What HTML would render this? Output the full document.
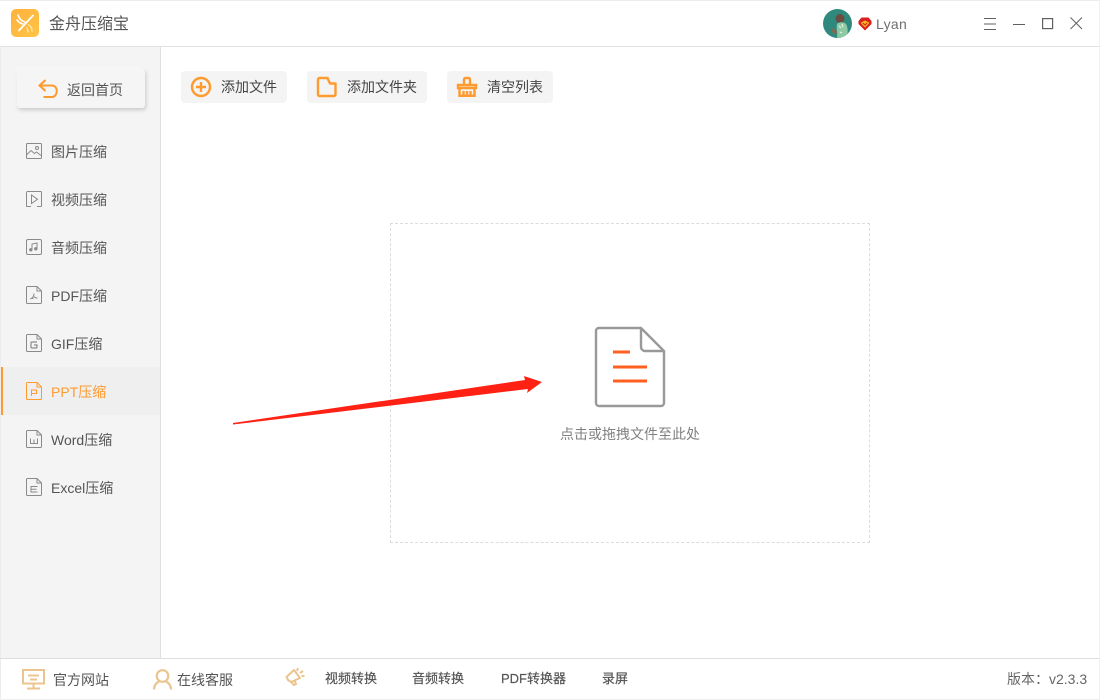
<!DOCTYPE html>
<html lang="zh">
<head>
<meta charset="utf-8">
<title>金舟压缩宝</title>
<style>
html,body{margin:0;padding:0;width:1100px;height:700px;overflow:hidden;background:#fff}
body{position:relative;font-family:"Liberation Sans","Noto Sans CJK SC",sans-serif;color:#555}
.a{position:absolute}
.t{position:absolute;white-space:nowrap;line-height:20px;height:20px}
svg{position:absolute;overflow:visible}
.side{left:51px;font-size:14px;color:#555}
.btn{position:absolute;top:71px;height:32px;background:#f4f4f4;border-radius:4px}
.bt{top:77px;font-size:14px;color:#444}
.ic{fill:none;stroke:#8a8a8a;stroke-width:1}
.or{fill:none;stroke:#ff9a2e;stroke-width:2.400}
.bm{font-size:13px;color:#555;top:669px;-webkit-text-stroke:.2px #555}
</style>
</head>
<body>
<!-- frame -->
<div class="a" style="left:0;top:0;width:1100px;height:1px;background:#ececec"></div>
<div class="a" style="left:0;top:46px;width:1100px;height:1px;background:#e2e2e2"></div>
<div class="a" style="left:0;top:47px;width:160px;height:611px;background:#f4f4f4"></div>
<div class="a" style="left:160px;top:47px;width:1px;height:611px;background:#e0e0e0"></div>
<div class="a" style="left:0;top:47px;width:1px;height:653px;background:#ececec"></div>
<div class="a" style="left:0;top:658px;width:1100px;height:1px;background:#dedede"></div>
<div class="a" style="left:0;top:699px;width:1100px;height:1px;background:#efefef"></div>
<div class="a" style="left:1099px;top:0;width:1px;height:700px;background:#f0f0f0"></div>

<!-- logo -->
<div class="a" style="left:11px;top:9px;width:28px;height:28px;border-radius:5px;background:linear-gradient(135deg,#ffb13c,#ffc445)"></div>
<svg style="left:11px;top:9px" width="28" height="28" viewBox="0 0 28 28" fill="none" stroke="#fff" stroke-linecap="round">
<path d="M22 6.500 8 21.500" stroke-width="1.800"/>
<path d="M7 6c1 3.500 3.500 6 7 7M6 11c1.500 2 3.500 3.500 6 4" stroke-width="1.600"/>
<path d="M17.500 16c2 .5 3.500 3 3.500 6M16 19c.5 1.500 1 3 1 4" stroke-width="1.400" stroke="#ffe6b8"/>
</svg>
<div class="t" style="left:49px;top:15px;font-size:16px;color:#555">金舟压缩宝</div>

<!-- user -->
<svg style="left:823px;top:9px" width="29" height="29" viewBox="0 0 29 29">
<defs><clipPath id="av"><circle cx="14.500" cy="14.500" r="14.500"/></clipPath></defs>
<circle cx="14.500" cy="14.500" r="14.500" fill="#2f8a7d"/>
<g clip-path="url(#av)">
<ellipse cx="17" cy="9.500" rx="4.500" ry="4.500" fill="#6a4c40"/>
<path d="M14 15c3-2.500 7-2 9 0 2 3 2 9 1 14H14c1-5-1-9 0-14z" fill="#8ec9a5"/>
<path d="M16 17l2 2M19 15l1 3M17 23l2 1" stroke="#e8f2e8" stroke-width="1.200"/>
<path d="M9 19l5 3-1 4-4-3z" fill="#7d6a55"/>
</g>
</svg>
<svg style="left:858px;top:17px" width="14" height="14" viewBox="0 0 14 14">
<path d="M3.500 .5h7L13.500 4v3L7 13.500.5 7V4z" fill="#d91f1f"/>
<path d="M3 5.500 7 3.500l4 2v1L7 10.500 3 6.500z" fill="#f2b91f"/>
<path d="M4.800 6 7 8l2.200-2" fill="none" stroke="#d91f1f" stroke-width="1.100"/>
</svg>
<div class="t" style="left:876px;top:14px;font-size:14px;letter-spacing:.3px;color:#6e6e6e">Lyan</div>
<svg style="left:983px;top:17px" width="14" height="14" viewBox="0 0 14 14" stroke="#606060" stroke-width="1" fill="none">
<path d="M1 1.500h12M1 7h12M1 12.500h12"/>
</svg>
<svg style="left:1012px;top:17px" width="14" height="14" viewBox="0 0 14 14" stroke="#606060" stroke-width="1" fill="none">
<path d="M1 7.500h12"/>
</svg>
<svg style="left:1041px;top:17px" width="14" height="14" viewBox="0 0 14 14" stroke="#606060" stroke-width="1.200" fill="none">
<rect x="1.600" y="1.600" width="10" height="10"/>
</svg>
<svg style="left:1069px;top:16px" width="14" height="14" viewBox="0 0 14 14" stroke="#606060" stroke-width="1" fill="none">
<path d="M1.500 1.500 13 13M13 1.500 1.500 13"/>
</svg>

<!-- back -->
<div class="a" style="left:17px;top:69px;width:128px;height:39px;background:#f5f5f5;border-radius:3px;box-shadow:1px 2px 4px rgba(0,0,0,.18),-1px -1px 2px rgba(255,255,255,.9)"></div>
<svg style="left:38px;top:79px" width="20" height="20" viewBox="0 0 20 20" fill="none" stroke="#ff9a2e" stroke-width="2">
<path d="M7.500 1 1.500 6.500l6 5.500M1.500 6.500h12.500c3 0 4.800 2.500 4.800 5.500s-1.800 6-4.800 6H5.500"/>
</svg>
<div class="t" style="left:67px;top:80px;font-size:14px;color:#555">返回首页</div>

<!-- sidebar icons -->
<svg style="left:26px;top:143px" width="16" height="16" viewBox="0 0 16 16" class="ic">
<rect x=".5" y=".5" width="15" height="15" rx="1"/><circle cx="11" cy="5" r="1.500"/><path d="M.5 12l4.500-4.500 3.500 3 2-1.500 4.500 3.500"/>
</svg>
<svg style="left:26px;top:191px" width="16" height="16" viewBox="0 0 16 16" class="ic">
<path d="M.5 15.500V1.500a1 1 0 0 1 1-1h13a1 1 0 0 1 1 1v14"/><path d="M5.500 4v8.500l6-4.200z"/><path d="M.5 15.500h4.500M11 15.500h4.500"/>
</svg>
<svg style="left:26px;top:239px" width="16" height="16" viewBox="0 0 16 16" class="ic">
<rect x=".5" y=".5" width="15" height="15" rx="1.500"/><path d="M6 10.500V5l5-1v5.500"/><circle cx="4.800" cy="10.800" r="1.200" fill="#8a8a8a"/><circle cx="9.800" cy="9.800" r="1.200" fill="#8a8a8a"/>
</svg>
<svg style="left:26px;top:286px" width="16" height="18" viewBox="0 0 16 18" class="ic">
<path d="M1.500.5H11l4.500 4.500v11.500a1 1 0 0 1-1 1h-13a1 1 0 0 1-1-1v-15a1 1 0 0 1 1-1zM11 .5V5h4.500"/><path d="M8 7.500c0 2.500-1.500 4.500-3.500 5.500M8 10.500c.5 1 2 1.500 3.500 1.500M4.500 12.500h3"/>
</svg>
<svg style="left:26px;top:334px" width="16" height="18" viewBox="0 0 16 18" class="ic">
<path d="M1.500.5H11l4.500 4.500v11.500a1 1 0 0 1-1 1h-13a1 1 0 0 1-1-1v-15a1 1 0 0 1 1-1zM11 .5V5h4.500"/><path d="M11 8h-5a1 1 0 0 0-1 1v4a1 1 0 0 0 1 1h4a1 1 0 0 0 1-1v-2H8" stroke-width="1.200"/>
</svg>

<!-- active -->
<div class="a" style="left:1px;top:367px;width:159px;height:48px;background:#efefef"></div>
<div class="a" style="left:1px;top:367px;width:2px;height:48px;background:#ff9a2e"></div>
<svg style="left:26px;top:382px" width="16" height="18" viewBox="0 0 16 18" fill="none" stroke="#ff9a2e" stroke-width="1">
<path d="M1.500.5H11l4.500 4.500v11.500a1 1 0 0 1-1 1h-13a1 1 0 0 1-1-1v-15a1 1 0 0 1 1-1zM11 .5V5h4.500"/><path d="M5.500 14V8h5v3.500h-5"/>
</svg>
<svg style="left:26px;top:430px" width="16" height="18" viewBox="0 0 16 18" class="ic">
<path d="M1.500.5H11l4.500 4.500v11.500a1 1 0 0 1-1 1h-13a1 1 0 0 1-1-1v-15a1 1 0 0 1 1-1zM11 .5V5h4.500"/><path d="M4.500 8.500v5h7v-5M8 9.500v4"/>
</svg>
<svg style="left:26px;top:478px" width="16" height="18" viewBox="0 0 16 18" class="ic">
<path d="M1.500.5H11l4.500 4.500v11.500a1 1 0 0 1-1 1h-13a1 1 0 0 1-1-1v-15a1 1 0 0 1 1-1zM11 .5V5h4.500"/><path d="M11.500 8.500h-6.500v5.500h6.500M5 11.200h5.500"/>
</svg>

<div class="t side" style="top:142px">图片压缩</div>
<div class="t side" style="top:190px">视频压缩</div>
<div class="t side" style="top:238px">音频压缩</div>
<div class="t side" style="top:286px">PDF压缩</div>
<div class="t side" style="top:334px">GIF压缩</div>
<div class="t side" style="top:382px;color:#ff9a2e">PPT压缩</div>
<div class="t side" style="top:430px">Word压缩</div>
<div class="t side" style="top:478px">Excel压缩</div>

<!-- toolbar -->
<div class="btn" style="left:181px;width:106px"></div>
<div class="btn" style="left:307px;width:120px"></div>
<div class="btn" style="left:447px;width:106px"></div>
<svg style="left:191px;top:77px" width="20" height="20" viewBox="0 0 20 20" class="or">
<circle cx="10" cy="10" r="9"/><path d="M10 5v10M5 10h10"/>
</svg>
<svg style="left:317px;top:77px" width="20" height="20" viewBox="0 0 20 20" class="or">
<path d="M2.500 1h8l2.500 5.500h5.500v11a1.500 1.500 0 0 1-1.500 1.500h-14A1.500 1.500 0 0 1 1 17.500v-15A1.500 1.500 0 0 1 2.500 1z" stroke-linejoin="round"/>
</svg>
<svg style="left:457px;top:77px" width="20" height="20" viewBox="0 0 20 20" class="or">
<path d="M7 7V2.500A1.500 1.500 0 0 1 8.500 1h3A1.500 1.500 0 0 1 13 2.500V7"/><path d="M1 8h18v3H1z"/><path d="M2.500 11v7.800h15V11M6.500 14v4.800M10 14v4.800M13.500 14v4.800"/>
</svg>
<div class="t bt" style="left:221px">添加文件</div>
<div class="t bt" style="left:347px">添加文件夹</div>
<div class="t bt" style="left:487px">清空列表</div>

<!-- drop zone -->
<div class="a" style="left:390px;top:223px;width:478px;height:318px;border:1px dashed #dcdcdc"></div>
<svg style="left:595px;top:327px" width="70" height="80" viewBox="0 0 70 80" fill="none">
<path d="M46 1H4a3 3 0 0 0-3 3v72a3 3 0 0 0 3 3h62a3 3 0 0 0 3-3V24z" stroke="#999" stroke-width="2.400"/>
<path d="M46 1v19a4 4 0 0 0 4 4h19" stroke="#999" stroke-width="2.400"/>
<path d="M18 25h17M18 40h34M18 54h34" stroke="#ff5f1f" stroke-width="3"/>
</svg>
<div class="t" style="left:560px;top:424px;font-size:14px;color:#808080;width:141px">点击或拖拽文件至此处</div>

<!-- arrow -->
<svg style="left:0;top:0" width="1100" height="700" viewBox="0 0 1100 700">
<path d="M233 423 525 380 524 376 542 382 527 393 528 389 233 424.500z" fill="#fe2114"/>
</svg>

<!-- footer -->
<svg style="left:21px;top:669px" width="24" height="21" viewBox="0 0 24 21" fill="none" stroke="#ebc48f" stroke-width="2">
<rect x="2" y="1" width="21" height="13.500"/><path d="M7 6.500h11M9 10.500h7M12.500 14.500V19M6 19.500h13"/>
</svg>
<svg style="left:153px;top:669px" width="19" height="21" viewBox="0 0 19 21" fill="none" stroke="#ebc48f" stroke-width="2.200">
<circle cx="9.500" cy="7" r="5.800"/><path d="M1 20.500c0-4 2.500-7 5-8M18 20.500c0-4-2.500-7-5-8"/>
</svg>
<svg style="left:285px;top:667px" width="20" height="21" viewBox="0 0 20 21" fill="none" stroke="#ebc48f" stroke-width="2" stroke-linejoin="round">
<path d="M9 3 15 11 6 15 3 13 1.500 10z"/><path d="M6 15l3 3 2-1-1.500-3.500"/><path d="M13 1 12 4M18 4 15 6M19.500 9 16.500 9"/>
</svg>
<div class="t" style="left:53px;top:670px;font-size:14px;color:#555">官方网站</div>
<div class="t" style="left:177px;top:670px;font-size:14px;color:#555">在线客服</div>
<div class="t bm" style="left:325px">视频转换</div>
<div class="t bm" style="left:412px">音频转换</div>
<div class="t bm" style="left:501px">PDF转换器</div>
<div class="t bm" style="left:602px">录屏</div>
<div class="t" style="left:1007px;top:669px;font-size:14px;color:#666">版本：v2.3.3</div>
</body>
</html>
